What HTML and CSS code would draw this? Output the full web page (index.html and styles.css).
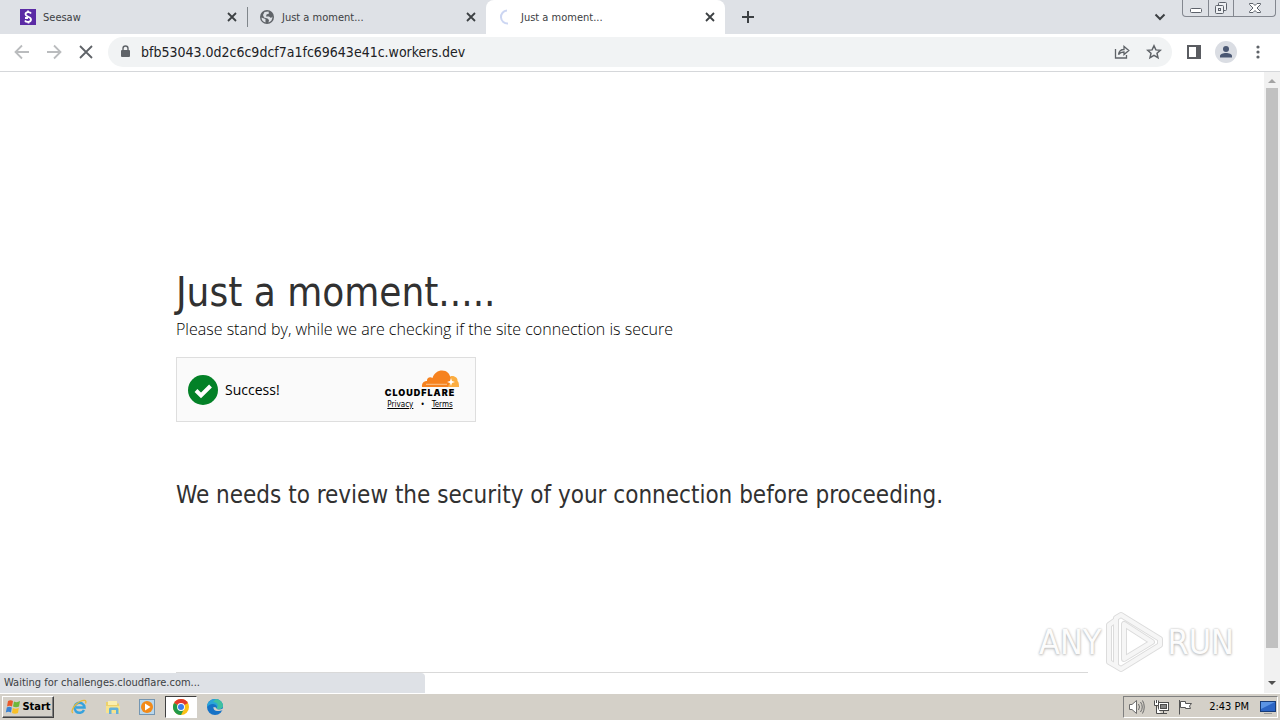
FILE: index.html
```
<!DOCTYPE html>
<html lang="en">

<head>
    <meta charset="UTF-8">
    <title>Just a moment...</title>
    <link rel="stylesheet" href="styles.css">
</head>

<body>
    <div class="desktop">
        <div class="tabs">
            <div class="tab">
                <svg class="icon" viewBox="0 0 16 16">
                    <rect width="16" height="16" fill="#5b2ba5" />
                    <path d="M11 4.500C10 2.500 5.500 2.500 5.500 5.300C5.500 8 11 7.500 11 10.500C11 13.500 6 13.500 5 11.500M8 1.500V4M8.500 12V14.500M5 9H8" fill="none" stroke="#fff" stroke-width="1.800" />
                </svg>
                <span class="tab-title">Seesaw</span>
                <button class="tab-close" aria-label="Close tab">
                    <svg width="10" height="10" viewBox="0 0 10 10"><path d="M1 1L9 9M9 1L1 9" stroke="#3c4043" stroke-width="1.800" /></svg>
                </button>
            </div>
            <div class="tab tab-line">
                <svg class="icon" viewBox="0 0 16 16">
                    <circle cx="8" cy="8" r="7" fill="#5f6368" />
                    <path d="M2.500 8.500L5 9.500L6.500 10V13.500C4 13 2.500 11 2.500 8.500ZM5.500 3L9.500 2.500L10 4.500L7.500 5.500L7 7.500H10L12 9L13.500 7.500C13.500 11 11.500 13 9.500 13.500L10 11L8.500 9.500L5 8.500L4 6Z" fill="#dee1e6" />
                </svg>
                <span class="tab-title">Just a moment...</span>
                <button class="tab-close" aria-label="Close tab">
                    <svg width="10" height="10" viewBox="0 0 10 10"><path d="M1 1L9 9M9 1L1 9" stroke="#3c4043" stroke-width="1.800" /></svg>
                </button>
            </div>
            <div class="tab tab-active">
                <svg class="icon" viewBox="0 0 16 16">
                    <path d="M9 1.500A6.500 6.500 0 1 0 10 14.500" fill="none" stroke="#ccd6f2" stroke-width="2" />
                </svg>
                <span class="tab-title">Just a moment...</span>
                <button class="tab-close" aria-label="Close tab">
                    <svg width="10" height="10" viewBox="0 0 10 10"><path d="M1 1L9 9M9 1L1 9" stroke="#3c4043" stroke-width="1.800" /></svg>
                </button>
            </div>
            <button class="new-tab" aria-label="New tab">
                <svg width="12" height="12" viewBox="0 0 12 12"><path d="M6 0V12M0 6H12" stroke="#3c4043" stroke-width="2" /></svg>
            </button>
            <button class="tab-search" aria-label="Search tabs">
                <svg width="12" height="8" viewBox="0 0 12 8"><path d="M1.500 1.500L6 6L10.500 1.500" fill="none" stroke="#3c4043" stroke-width="2" /></svg>
            </button>
            <div class="window-btns">
                <button class="window-btn" aria-label="Minimize">
                    <svg width="14" height="14" viewBox="0 0 14 14"><rect x="1.500" y="7.500" width="11" height="4" rx="1" fill="#fff" stroke="#5d626b" /></svg>
                </button>
                <button class="window-btn" aria-label="Restore">
                    <svg width="14" height="14" viewBox="0 0 14 14" fill="#eef0f3" stroke="#5d626b">
                        <rect x="4.500" y="1.500" width="8" height="8" rx="1" />
                        <rect x="1.500" y="4.500" width="8" height="8" rx="1" />
                        <rect x="4.500" y="7.500" width="2" height="2" />
                    </svg>
                </button>
                <button class="window-btn window-close" aria-label="Close">
                    <svg width="14" height="14" viewBox="0 0 14 14"><path d="M1.500 2.500H5L7 4.500L9 2.500H12.500V3.500L9 7L12.500 10.500V11.500H9L7 9.500L5 11.500H1.500V10.500L5 7L1.500 3.500Z" fill="#fff" stroke="#5d626b" /></svg>
                </button>
            </div>
        </div>
        <div class="toolbar">
            <button class="tool" aria-label="Back">
                <svg class="icon" viewBox="0 0 16 16"><path d="M15 8H2M8 1.500L1.500 8L8 14.500" fill="none" stroke="#babcbe" stroke-width="1.800" /></svg>
            </button>
            <button class="tool" aria-label="Forward">
                <svg class="icon" viewBox="0 0 16 16"><path d="M1 8H14M8 1.500L14.500 8L8 14.500" fill="none" stroke="#babcbe" stroke-width="1.800" /></svg>
            </button>
            <button class="tool" aria-label="Stop">
                <svg class="icon" viewBox="0 0 16 16"><path d="M2 2L14 14M14 2L2 14" stroke="#5f6368" stroke-width="1.800" /></svg>
            </button>
            <div class="address">
                <svg class="icon" viewBox="0 0 16 16">
                    <rect x="4" y="6" width="9" height="7" rx="1" fill="#5f6368" />
                    <path d="M6 6.500V4.500A2.500 2.500 0 0 1 11 4.500V6.500" fill="none" stroke="#5f6368" stroke-width="1.400" />
                </svg>
                <input class="url" type="text" aria-label="Address" value="bfb53043.0d2c6c9dcf7a1fc69643e41c.workers.dev">
                <button class="tool" aria-label="Share">
                    <svg class="icon" viewBox="0 0 16 16" fill="none" stroke="#5f6368" stroke-width="1.300">
                        <path d="M1.500 5V14H12.500V11" />
                        <path d="M4.500 10.500C5 7 7 5.500 10 5.500V2.500L14.800 6.500L10 10.500V8C7.500 8 6 8.500 4.500 10.500Z" />
                    </svg>
                </button>
                <button class="tool" aria-label="Bookmark">
                    <svg class="icon" viewBox="0 0 16 16"><path d="M8 1.800L9.900 5.900L14.300 6.300L11 9.300L12 13.700L8 11.400L4 13.700L5 9.300L1.700 6.300L6.100 5.900Z" fill="none" stroke="#5f6368" stroke-width="1.500" /></svg>
                </button>
            </div>
            <button class="tool" aria-label="Side panel">
                <svg class="icon" viewBox="0 0 16 16"><path d="M1 1H15V15H1ZM3 3V13H10V3Z" fill="#5a5c61" fill-rule="evenodd" /></svg>
            </button>
            <button class="tool" aria-label="Profile">
                <svg width="22" height="22" viewBox="0 0 22 22">
                    <circle cx="11" cy="11" r="11" fill="#dadde3" />
                    <circle cx="11" cy="8" r="3" fill="#4b5873" />
                    <path d="M5 16.500V15C5 11 17 11 17 15V16.500Z" fill="#4b5873" />
                </svg>
            </button>
            <button class="tool" aria-label="Menu">
                <svg class="icon" viewBox="0 0 16 16" fill="#5f6368">
                    <circle cx="8" cy="3" r="1.600" />
                    <circle cx="8" cy="8" r="1.600" />
                    <circle cx="8" cy="13" r="1.600" />
                </svg>
            </button>
        </div>
        <div class="view">
            <div class="page">
                <div class="content">
                    <h1>Just a moment.....</h1>
                    <p class="lead">Please stand by, while we are checking if the site connection is secure</p>
                    <div class="widget">
                        <svg width="30" height="30" viewBox="0 0 30 30">
                            <circle cx="15" cy="15" r="15" fill="#038127" />
                            <path d="M8 15.500L13 20.500L22.500 11" fill="none" stroke="#fff" stroke-width="4" />
                        </svg>
                        <span class="success">Success!</span>
                        <div class="brand">
                            <svg width="78" height="17" viewBox="0 0 78 17">
                                <path d="M61 17C61 13 66 10 70 6C74 5.500 77 8 76.500 11C78 12 78 15 78 17Z" fill="#fbad41" />
                                <path d="M41 17C40.500 13 43 11 46 11C45.500 8 49 6 51.500 8C53 3 57 .500 61 .500C66 .500 69 4 69.500 8C70 11 68 14 67 17Z" fill="#f6821f" />
                                <path d="M45 14.300H66" stroke="#fcc48e" />
                                <path d="M70 8L71 11L74 12L71 13L70 16L69 13L66 12L69 11Z" fill="#fff" />
                            </svg>
                            <strong class="brand-name">CLOUDFLARE</strong>
                            <div class="links">
                                <a href="#">Privacy</a>
                                <span>•</span>
                                <a href="#">Terms</a>
                            </div>
                        </div>
                    </div>
                    <h2>We needs to review the security of your connection before proceeding.</h2>
                </div>
                <div class="footer"></div>
            </div>
            <div class="scrollbar">
                <svg width="16" height="16" viewBox="0 0 16 16"><path d="M4 11L8 7L12 11Z" fill="#a3a3a3" /></svg>
                <div class="track">
                    <div class="thumb"></div>
                </div>
                <svg width="16" height="16" viewBox="0 0 16 16"><path d="M4 4L8 8L12 4Z" fill="#505050" /></svg>
            </div>
            <div class="status">Waiting for challenges.cloudflare.com...</div>
            <div class="watermark">
                <span>ANY</span>
                <svg width="58" height="62" viewBox="0 0 58 62" fill="none" stroke-linejoin="round">
                    <path d="M16 4L55 28V34L16 58L11 55V7ZM19 13V48L47 31ZM11 9L4 14V51L11 55" stroke="#dcdcdc" stroke-width="6" />
                    <path d="M16 4L55 28V34L16 58L11 55V7ZM19 13V48L47 31ZM11 9L4 14V51L11 55" stroke="#f6f6f6" stroke-width="4" />
                </svg>
                <span>RUN</span>
            </div>
        </div>
        <div class="taskbar">
            <button class="start">
                <svg width="16" height="16" viewBox="0 0 16 16">
                    <path d="M3 2Q5.500 .500 8 2L7 7.500Q4.500 6 2 7.500Z" fill="#e9592b" />
                    <path d="M9 2.500Q12 4 15 2L14 7.500Q11 9 8 7.500Z" fill="#6fb73b" />
                    <path d="M1.800 8.500Q4 7 6.800 8.500L6 13.500Q3.500 12 .800 13.500Z" fill="#3a83d4" />
                    <path d="M7.800 9Q11 10.500 13.800 8.700L13 14Q10 15.500 7 14Z" fill="#f8bf26" />
                </svg>
                Start
            </button>
            <button class="task" aria-label="Internet Explorer">
                <svg class="icon" viewBox="0 0 16 16" fill="none">
                    <path d="M13 11A5 5 0 1 1 13.500 8.500H5" stroke="#36a2dd" stroke-width="2.500" />
                    <path d="M2 14C-1 12 4 5 9 2.500C13 .500 16 1 14.500 4.500" stroke="#e8b939" stroke-width="1.300" />
                </svg>
            </button>
            <button class="task" aria-label="Explorer">
                <svg class="icon" viewBox="0 0 16 16">
                    <path d="M1 3H6L7 4.500H14V13H1Z" fill="#ecd16b" />
                    <rect x="3" y="2" width="9" height="4" fill="#fbefae" />
                    <path d="M1 7H15V14H1Z" fill="#f7e38d" />
                    <path d="M4 15V10Q4 8.500 5.500 8.500H12Q13.500 8.500 13.500 10V15H11V11H6.500V15Z" fill="#62b1d9" />
                </svg>
            </button>
            <button class="task" aria-label="Media Player">
                <svg class="icon" viewBox="0 0 16 16">
                    <rect x=".500" y=".500" width="15" height="15" fill="#b9d7ec" stroke="#7496b2" />
                    <circle cx="8" cy="8" r="6" fill="#f28a18" />
                    <path d="M6 4.500L11.500 8L6 11.500Z" fill="#fff" />
                </svg>
            </button>
            <button class="task task-active" aria-label="Chrome">
                <svg class="icon" viewBox="0 0 16 16">
                    <circle cx="8" cy="8" r="8" fill="#fbc116" />
                    <path d="M8 8L1.070 4A8 8 0 0 1 14.930 4Z" fill="#e33b2e" />
                    <path d="M8 8L1.070 4A8 8 0 0 0 8 16L11 10Z" fill="#229a4a" />
                    <circle cx="8" cy="8" r="3.900" fill="#fff" />
                    <circle cx="8" cy="8" r="3" fill="#3b7ded" />
                </svg>
            </button>
            <button class="task" aria-label="Edge">
                <svg class="icon" viewBox="0 0 16 16">
                    <circle cx="8" cy="8" r="8" fill="#1672c6" />
                    <path d="M0 8C0 3 4 0 8 0C13 0 16 3.500 16 7C16 10 11 11 9.500 9.500C11 8 9 5 6 5C3 5 1 6.500 0 8Z" fill="#2aa5d8" />
                    <path d="M9 0C14 1 16 4 16 7C16 10 11 11 9.500 9.500C12 7 11 3 6 3Z" fill="#3fc0a0" />
                    <path d="M6.500 8C6 11.500 10 13.500 16 11V9.500C13 11 9.500 11 9 8.500Z" fill="#d4d0c8" />
                </svg>
            </button>
            <div class="tray">
                <svg width="16" height="16" viewBox="0 0 16 16" fill="#fff" stroke="#6b6b6b">
                    <path d="M.500 5.500H3L7.500 1.500V14.500L3 10.500H.500Z" />
                    <path d="M9.500 5Q11.500 8 9.500 11M11.500 3Q15 8 11.500 13M13.500 1.500Q17 8 13.500 14.500" fill="none" />
                </svg>
                <svg width="16" height="16" viewBox="0 0 16 16" fill="#fff" stroke="#4c4c4c">
                    <rect x="5.500" y="3.500" width="10" height="8" />
                    <rect x="7.500" y="5.500" width="6" height="4" fill="#858585" />
                    <path d="M8 14.500H14M10.500 12V14M3.500 7V14.500H8" />
                    <path d="M1.500 1.500V6.500H5.500V1.500M3.500 1V4" />
                </svg>
                <svg width="16" height="16" viewBox="0 0 16 16" fill="#fff" stroke="#555">
                    <path d="M2.500 1V15.500" />
                    <path d="M3.500 2.500H8.500V4.500H14.500L12.500 7L13.500 9.500H8.500V8.500H3.500Z" />
                </svg>
                <span class="clock">2:43 PM</span>
                <svg width="16" height="16" viewBox="0 0 16 16">
                    <rect x=".500" y="2.500" width="15" height="10" fill="#2c65c4" stroke="#173c78" />
                    <path d="M1 3H15L1 10Z" fill="#5b94e4" />
                    <path d="M4 14.500H12" stroke="#999" />
                </svg>
            </div>
        </div>
    </div>
</body>

</html>
```
FILE: styles.css
```
* {
    box-sizing: border-box;
}

body {
    margin: 0;
    font-family: "DejaVu Sans Condensed", "Noto Sans", sans-serif;
    font-size: 11px;
    color: #202124;
}

button {
    display: flex;
    align-items: center;
    justify-content: center;
    padding: 0;
    border: none;
    background: none;
    font-family: inherit;
    color: inherit;
}

svg {
    display: block;
    flex: none;
}

.icon {
    width: 16px;
    height: 16px;
}

.desktop {
    height: 100vh;
    display: flex;
    flex-direction: column;
    overflow: hidden;
}

/* tab strip */
.tabs {
    height: 34px;
    display: flex;
    padding-left: 8px;
    background: #dee1e6;
}

.tab {
    flex: 0 1 239px;
    display: flex;
    align-items: center;
    gap: 7px;
    padding: 0 10px 0 12px;
    color: #3c4043;
}

.tab-line {
    background: linear-gradient(#80868b, #80868b) left center / 1px 20px no-repeat;
}

.tab-active {
    background: #fff;
    border-radius: 8px 8px 0 0;
}

.tab-title {
    flex: 1;
}

.new-tab {
    width: 46px;
}

.tab-search {
    width: 24px;
    margin-left: auto;
}

.window-btns {
    display: flex;
    height: 17px;
    margin: 0 4px 0 10px;
    border: 1px solid #83878f;
    border-top: none;
    border-radius: 0 0 4px 4px;
}

.window-btn {
    width: 25px;
}

.window-btn + .window-btn {
    border-left: 1px solid #83878f;
}

.window-close {
    width: 42px;
}

/* toolbar */
.toolbar {
    height: 38px;
    display: flex;
    align-items: center;
    padding: 0 6px 1px;
    background: #fff;
    border-bottom: 1px solid #d5d7da;
}

.tool {
    width: 32px;
    height: 28px;
}

.address {
    flex: 1;
    height: 30px;
    display: flex;
    align-items: center;
    margin: 0 6px;
    padding: 0 2px 0 9px;
    border-radius: 15px;
    background: #f1f3f4;
}

.url {
    flex: 1;
    min-width: 0;
    padding: 0;
    margin-left: 8px;
    border: none;
    outline: none;
    background: none;
    font-family: inherit;
    font-size: 14px;
    color: #202124;
}

/* page */
.view {
    flex: 1;
    min-height: 0;
    display: flex;
    position: relative;
    background: #fff;
}

.page {
    flex: 1;
    display: flex;
    flex-direction: column;
    justify-content: space-between;
    padding-bottom: 20px;
    color: #313131;
}

.content,
.footer {
    width: 100%;
    max-width: 912px;
    margin: 0 auto;
}

.content {
    padding-top: 194px;
}

.footer {
    border-top: 1px solid #d9d9d9;
}

h1 {
    margin: 0;
    font-size: 40px;
    line-height: 52px;
    font-weight: normal;
}

.lead {
    margin: 0;
    font-family: "Open Sans", sans-serif;
    font-size: 16px;
    line-height: 22px;
    font-weight: 300;
    color: #000;
}

h2 {
    margin: 56px 0 0;
    font-size: 24px;
    line-height: 34px;
    font-weight: normal;
}

.widget {
    width: 300px;
    height: 65px;
    display: flex;
    align-items: center;
    gap: 7px;
    margin-top: 17px;
    padding: 0 16px 0 11px;
    border: 1px solid #dedede;
    background: #fafafa;
}

.success {
    flex: 1;
    font-family: "Open Sans", sans-serif;
    font-size: 14px;
    color: #000;
}

.brand {
    display: flex;
    flex-direction: column;
    align-items: center;
    padding-top: 2px;
    color: #000;
}

.brand-name {
    font-family: "Inter", sans-serif;
    font-size: 9px;
    line-height: 12px;
    letter-spacing: 1px;
    font-weight: 900;
}

.links {
    display: flex;
    gap: 7px;
    font-size: 8px;
    line-height: 12px;
}

.links a {
    color: #000;
}

.scrollbar {
    width: 16px;
    display: flex;
    flex-direction: column;
    background: #f1f1f1;
}

.track {
    flex: 1;
    padding: 0 2px;
}

.thumb {
    height: 95%;
    background: #c1c1c1;
}

.status {
    position: absolute;
    left: 0;
    bottom: 0;
    width: 425px;
    height: 20px;
    padding-left: 4px;
    border-radius: 0 4px 0 0;
    background: #dee1e6;
    color: #3c4043;
    line-height: 20px;
}

.watermark {
    position: absolute;
    right: 46px;
    bottom: 20px;
    display: flex;
    align-items: center;
    gap: 4px;
    font-size: 34px;
    color: #fcfcfc;
    text-shadow: 0 0 2px #bbb, 0 1px 3px #bbb;
}

/* taskbar */
.taskbar {
    height: 27px;
    display: flex;
    align-items: center;
    padding: 0 2px;
    background: #d4d0c8;
    box-shadow: inset 0 1px #fff;
    color: #000;
}

.start {
    width: 52px;
    height: 22px;
    gap: 1px;
    border: 1px solid;
    border-color: #fff #404040 #404040 #fff;
    box-shadow: inset -1px -1px #808080;
    font-size: 11px;
    font-weight: bold;
    margin-right: 8px;
}

.task {
    width: 32px;
    height: 22px;
    margin: 0 1px;
}

.task-active {
    border: 1px solid;
    border-color: #404040 #fff #fff #404040;
    background: #fff;
}

.tray {
    height: 22px;
    display: flex;
    align-items: center;
    gap: 8px;
    margin-left: auto;
    padding: 0 1px 0 5px;
    border: 1px solid;
    border-color: #808080 #fff #fff #808080;
}

.clock {
    margin: 0 3px 0 8px;
}
```
